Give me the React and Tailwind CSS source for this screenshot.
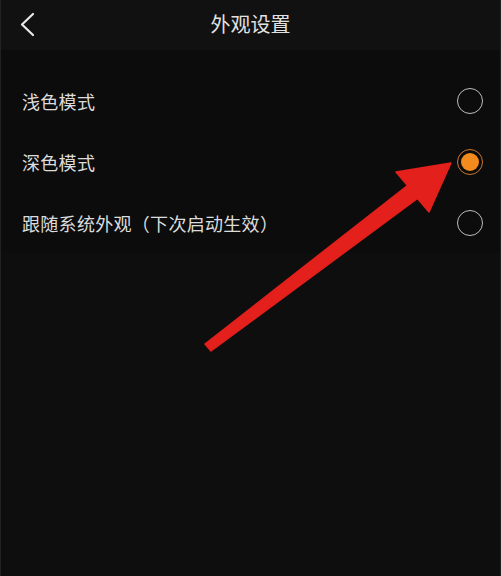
import React from "react";

const font = { fontFamily: '"Noto Sans CJK SC", "Noto Sans", sans-serif' };

function Radio({ checked }) {
  if (checked) {
    return (
      <div className="w-[26px] h-[26px] rounded-full border-[1.5px] border-[#c9772c] flex items-center justify-center">
        <div className="w-[18px] h-[18px] rounded-full bg-[#f28a1d]" />
      </div>
    );
  }
  return <div className="w-[26px] h-[26px] rounded-full border-[1.5px] border-[#bdbdbd]" />;
}

function Row({ label, checked }) {
  return (
    <div className="h-[61px] flex items-center justify-between pl-[21px] pr-[17px]">
      <span className="text-[18px] text-[#dcdcdc] leading-none tracking-[0.3px]">{label}</span>
      <Radio checked={checked} />
    </div>
  );
}

export default function App() {
  return (
    <div
      className="relative w-[501px] h-[576px] bg-[#0e0e0e] overflow-hidden border-l border-r border-[#222]"
      style={font}
    >
      <div className="h-[50px] bg-[#111111] flex items-center relative">
        <svg className="absolute left-[17px] top-[11px]" width="20" height="28" viewBox="0 0 20 28">
          <path d="M15 3 L4 13.5 L15 24" fill="none" stroke="#e8e8e8" strokeWidth="2.2" strokeLinecap="round" strokeLinejoin="round" />
        </svg>
        <div className="flex-1 text-center text-[20px] text-[#e2e2e2] leading-none -mt-[3px]">外观设置</div>
      </div>
      <div className="pt-[20px] bg-[#0c0c0c]">
        <Row label="浅色模式" checked={false} />
        <Row label="深色模式" checked={true} />
        <Row label="跟随系统外观（下次启动生效）" checked={false} />
      </div>
      <svg className="absolute left-0 top-0 pointer-events-none" width="501" height="576" viewBox="0 0 501 576">
        <polygon
          points="450,163 428,212 416.5,198.5 210,351 204,344 406.5,185.5 395,172"
          fill="#e3201b"
          strokeLinejoin="round"
          stroke="#e3201b"
          strokeWidth="1.5"
        />
      </svg>
    </div>
  );
}
